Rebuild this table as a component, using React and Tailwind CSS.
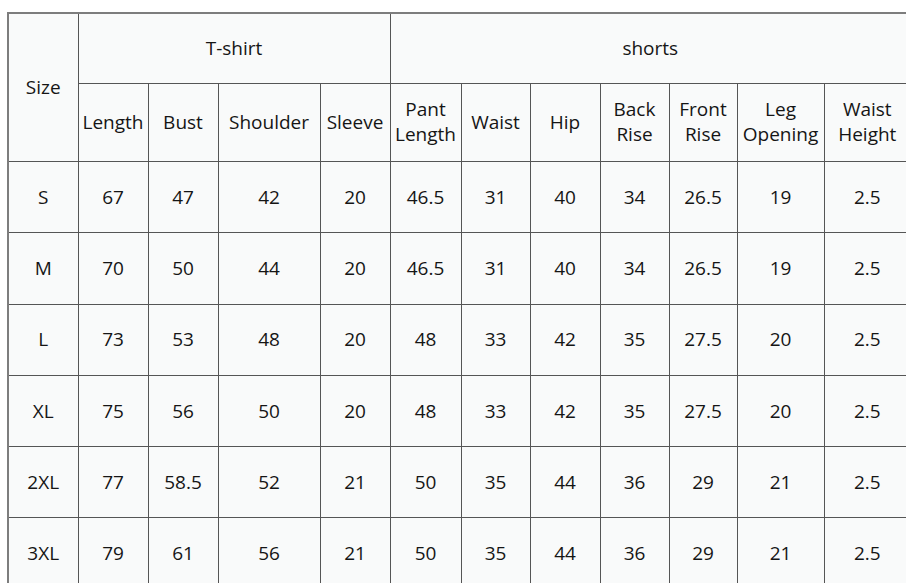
const cols = [70, 70, 70, 102, 70, 71, 69, 70, 69, 68, 87, 87];

const subHeads = [
  ["Length"],
  ["Bust"],
  ["Shoulder"],
  ["Sleeve"],
  ["Pant", "Length"],
  ["Waist"],
  ["Hip"],
  ["Back", "Rise"],
  ["Front", "Rise"],
  ["Leg", "Opening"],
  ["Waist", "Height"],
];

const rows = [
  ["S", "67", "47", "42", "20", "46.5", "31", "40", "34", "26.5", "19", "2.5"],
  ["M", "70", "50", "44", "20", "46.5", "31", "40", "34", "26.5", "19", "2.5"],
  ["L", "73", "53", "48", "20", "48", "33", "42", "35", "27.5", "20", "2.5"],
  ["XL", "75", "56", "50", "20", "48", "33", "42", "35", "27.5", "20", "2.5"],
  ["2XL", "77", "58.5", "52", "21", "50", "35", "44", "36", "29", "21", "2.5"],
  ["3XL", "79", "61", "56", "21", "50", "35", "44", "36", "29", "21", "2.5"],
];

const cell = "border border-[#555] text-center align-middle p-0";

export default function App() {
  return (
    <div className="w-[906px] h-[583px] overflow-hidden bg-white pt-[12px] pl-[7px] font-['Open_Sans',sans-serif] text-[19px] text-[#151515]">
      <table className="table-fixed border-collapse bg-[#f9fafa] border-2 border-[#7d7d7d] w-[903px]">
        <colgroup>
          {cols.map((w, i) => (
            <col key={i} style={{ width: w }} />
          ))}
        </colgroup>
        <thead>
          <tr className="h-[70px]">
            <th rowSpan={2} className={`${cell} font-normal`}>
              Size
            </th>
            <th colSpan={4} className={`${cell} font-normal`}>
              T-shirt
            </th>
            <th colSpan={7} className={`${cell} font-normal`}>
              shorts
            </th>
          </tr>
          <tr className="h-[78.5px]">
            {subHeads.map((lines, i) => (
              <th key={i} className={`${cell} font-normal leading-[25px] whitespace-nowrap`}>
                {lines.map((l, j) => (
                  <div key={j}>{l}</div>
                ))}
              </th>
            ))}
          </tr>
        </thead>
        <tbody>
          {rows.map((r) => (
            <tr key={r[0]} className="h-[71.3px]">
              {r.map((v, i) => (
                <td key={i} className={cell}>
                  {v}
                </td>
              ))}
            </tr>
          ))}
        </tbody>
      </table>
    </div>
  );
}
